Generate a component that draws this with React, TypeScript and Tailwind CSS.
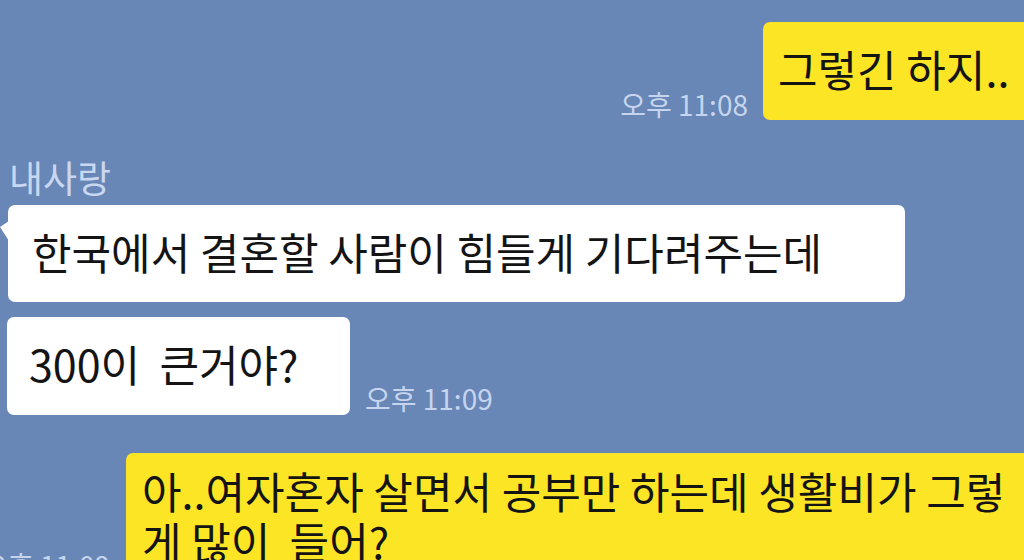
export default function App() {
  return (
    <div className="relative h-[560px] w-[1024px] overflow-hidden bg-[#6886b6] font-['Noto_Sans_CJK_KR','Noto_Sans',sans-serif] text-[#141414]">
      {/* 내 메시지 */}
      <div className="mt-[22px] flex items-end justify-end">
        <span className="mb-[2px] mr-[15px] text-[28px] leading-[28px] text-[#c6d5ee]">오후 11:08</span>
        <div className="flex h-[98px] w-[261px] items-center rounded-l-[7px] bg-[#fce524] pb-[6px] pl-[15px] text-[43px] leading-[52px] whitespace-nowrap">
          그렇긴 하지..
        </div>
      </div>

      {/* 상대방 */}
      <div className="ml-[9px] mt-[39px] text-[37px] leading-[37px] text-[#c9d8f0]">내사랑</div>

      <div className="relative ml-[8px] mt-[9px] flex h-[97px] w-[897px] items-center rounded-[7px] bg-white pb-[6px] pl-[24px] text-[43px] leading-[52px]">
        <svg className="absolute -left-[8px] top-[16px]" width="9" height="22" viewBox="0 0 9 22">
          <path d="M9 0 L0 6 L9 20 Z" fill="#ffffff" />
        </svg>
        한국에서 결혼할 사람이 힘들게 기다려주는데
      </div>

      <div className="mt-[15px] flex items-end">
        <div className="ml-[7px] flex h-[98px] w-[343px] items-center rounded-[7px] bg-white pb-[6px] pl-[22px] text-[43px] leading-[52px] whitespace-pre">
          300이  큰거야?
        </div>
        <span className="mb-[3px] ml-[15px] text-[28px] leading-[28px] text-[#c6d5ee]">오후 11:09</span>
      </div>

      {/* 내 메시지 2 */}
      <div className="mt-[38px] flex items-end">
        <div className="flex w-[126px] shrink-0 justify-end pr-[16px]">
          <span className="shrink-0 whitespace-nowrap text-[28px] leading-[28px] text-[#c6d5ee]">오후 11:09</span>
        </div>
        <div className="w-[910px] shrink-0 rounded-[7px] bg-[#fce524] pb-[14px] pl-[16px] pt-[12px] text-[43px] leading-[50px] whitespace-pre">
          <div>아..여자혼자 살면서 공부만 하는데 생활비가 그렇</div>
          <div>게 많이  들어?</div>
        </div>
      </div>
    </div>
  );
}
